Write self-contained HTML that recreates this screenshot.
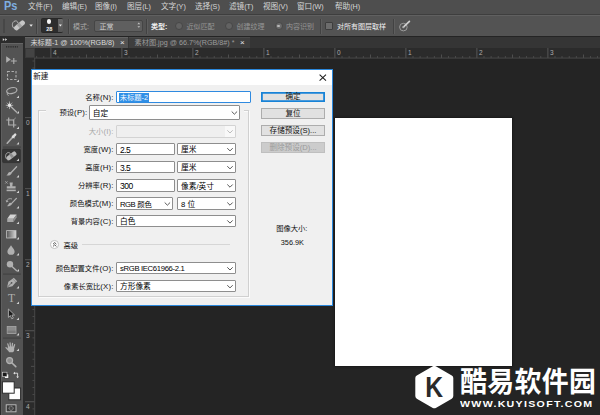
<!DOCTYPE html>
<html><head><meta charset="utf-8">
<style>
html,body{margin:0;padding:0;}
body{width:600px;height:415px;overflow:hidden;background:#242424;position:relative;font-family:"Liberation Sans","Noto Sans CJK SC",sans-serif;}
div,span{position:absolute;box-sizing:border-box;white-space:nowrap;}
svg{position:absolute;left:0;top:0;}
#menubar{left:0;top:0;width:600px;height:15px;background:#4e4e4e;border-bottom:1px solid #3e3e3e;}
#menubar span.m{top:2.2px;font-size:7.6px;line-height:10px;color:#d6d6d6;}
#menubar span.m i{font-style:normal;font-size:7.2px;}
#ps{left:4.2px;top:-0.6px;font-size:12.2px;line-height:14px;color:#7eaee0;font-weight:bold;transform-origin:0 50%;transform:scaleX(0.9);}
#optbar{left:0;top:15px;width:600px;height:21px;background:#535353;border-top:1px solid #606060;}
#optbar span{font-size:7px;line-height:10px;color:#a9a9a9;top:6px;}
#optbar .sep{top:3px;width:1px;height:15px;background:#424242;border-right:1px solid #5e5e5e;width:2px;}
#tabbar{left:25px;top:37px;width:575px;height:11px;background:#353535;}
.tab{top:0;height:11px;font-size:7.2px;line-height:11px;}
#hruler{left:25px;top:48px;width:575px;height:10px;background:#2b2b2b;}
#vruler{left:25px;top:58px;width:9.5px;height:357px;background:#2b2b2b;}
#tb{left:0;top:36px;width:25px;height:379px;background:#2b2b2b;}
#tbbody{left:1px;top:7px;width:22px;height:372px;background:#535353;border-top:1px solid #656565;border-left:1px solid #5e5e5e;}
#dlg{left:31px;top:69px;width:301.8px;height:236.5px;background:#f0f0f0;border:1px solid #2b88dc;}
#dlg .ttl{left:0;top:0;width:300px;height:15px;background:#fff;}
#dlg span.l i{font-style:normal;font-size:7.8px;letter-spacing:0.2px;}
#dlg span.l{font-size:7.3px;line-height:10px;color:#111;text-align:right;}
.inp{background:#fff;border:1px solid #8e8e8e;border-radius:1px;font-size:7.7px;line-height:10.4px;padding-top:1.4px;color:#000;padding-left:3px;}
.btn{left:229px;width:64px;height:10.7px;background:#e1e1e1;border:1px solid #adadad;font-size:7.6px;line-height:8.7px;padding-top:0.8px;text-align:center;color:#111;}
</style></head><body>

<div id="menubar">
<span id="ps">Ps</span>
<span class="m" style="left:28px">文件<i>(F)</i></span>
<span class="m" style="left:62px">编辑<i>(E)</i></span>
<span class="m" style="left:95px">图像<i>(I)</i></span>
<span class="m" style="left:127px">图层<i>(L)</i></span>
<span class="m" style="left:161px">文字<i>(Y)</i></span>
<span class="m" style="left:195px">选择<i>(S)</i></span>
<span class="m" style="left:229px">滤镜<i>(T)</i></span>
<span class="m" style="left:263px">视图<i>(V)</i></span>
<span class="m" style="left:297px">窗口<i>(W)</i></span>
<span class="m" style="left:335px">帮助<i>(H)</i></span>
</div>

<div id="optbar">
<div class="sep" style="left:36.2px"></div>
<div style="left:41px;top:2.4px;width:22.2px;height:14.2px;background:#2d2d2d;border:1px solid #282828;border-radius:1.5px;"></div>
<div style="left:57.8px;top:3.2px;width:5px;height:12.6px;background:linear-gradient(#6a6a6a,#555);border-radius:0 1px 1px 0;"></div>
<div style="left:46.6px;top:3px;width:4.8px;height:4.8px;border-radius:2.4px;background:#f4f4f4;"></div>
<span style="left:46.2px;top:9.8px;font-size:5.6px;line-height:6px;color:#f0f0f0;font-weight:bold;">28</span>
<div class="sep" style="left:68px"></div>
<span style="left:73px">模式:</span>
<div style="left:94px;top:4px;width:49px;height:12px;background:#5f5f5f;border:1px solid #454545;border-radius:2px;"></div>
<span style="left:99.5px;color:#cfcfcf">正常</span>
<div class="sep" style="left:146px"></div>
<span style="left:151px;font-weight:bold;color:#f0f0f0">类型:</span>
<div style="left:175px;top:6px;width:8px;height:8px;border-radius:4px;background:#626262;border:1px solid #474747;"></div>
<span style="left:186.5px;color:#959595">近似匹配</span>
<div style="left:225px;top:6px;width:8px;height:8px;border-radius:4px;background:#626262;border:1px solid #474747;"></div>
<span style="left:236.5px;color:#959595">创建纹理</span>
<div style="left:274.5px;top:6px;width:8px;height:8px;border-radius:4px;background:#6c6c6c;border:1px solid #474747;"></div>
<div style="left:277.3px;top:8.8px;width:2.4px;height:2.4px;border-radius:1.2px;background:#b8b8b8;"></div>
<span style="left:286px;color:#959595">内容识别</span>
<div class="sep" style="left:320px"></div>
<div style="left:325.3px;top:5.5px;width:8.2px;height:8.6px;background:#6c6c6c;border:1px solid #3d3d3d;border-radius:1px;"></div>
<span style="left:337px;color:#f0f0f0">对所有图层取样</span>
<div class="sep" style="left:393px"></div>
</div>

<div id="tabbar">
<div class="tab" style="left:0;width:103px;background:#535353;color:#dcdcdc;padding-left:5.4px;border-top:1px solid #646464;line-height:9.5px;">未标题-1 @ 100%(RGB/8) <span style="left:95px;top:-0.5px;color:#e8e8e8;font-size:8px;">×</span></div>
<div class="tab" style="left:103.5px;width:121px;background:#3e3e3e;color:#9c9c9c;padding-left:6px;border-top:1px solid #4a4a4a;line-height:9.5px;">素材图.jpg @ 66.7%(RGB/8#) * <span style="left:111.5px;top:-0.5px;color:#e8e8e8;font-size:8px;">×</span></div>
</div>
<div id="hruler">
<div style="left:0;top:0;width:9.5px;height:10px;background:#444;border:1px solid #3a3a3a;"></div>
</div>
<div id="vruler"></div>

<div id="tb"><div id="tbbody"></div></div>

<div style="left:334.85px;top:117.75px;width:177.5px;height:247.9px;background:#fff;box-shadow:0 0 1.6px 0.8px #1a1a1a;"></div>

<svg width="600" height="415" viewBox="0 0 600 415">
<defs><linearGradient id="gr" x1="0" x2="1" y1="0" y2="0"><stop offset="0" stop-color="#555"/><stop offset="1" stop-color="#d8d8d8"/></linearGradient></defs>
<!-- options bar gripper -->
<g fill="#3c3c3c"><rect x="3" y="19.5" width="2" height="1"/><rect x="3" y="21.5" width="2" height="1"/><rect x="3" y="23.5" width="2" height="1"/><rect x="3" y="25.5" width="2" height="1"/><rect x="3" y="27.5" width="2" height="1"/><rect x="3" y="29.5" width="2" height="1"/><rect x="3" y="31.5" width="2" height="1"/></g>
<!-- options tool icon: healing brush -->
<path d="M15.6 29C12.2 28.6 11.2 23.4 14 21.4C15.8 20.2 17.8 21.2 18 23" fill="none" stroke="#c0c0c0" stroke-width="0.9"/>
<rect x="13.3" y="23" width="12.4" height="4.8" rx="1.8" transform="rotate(-40 19.5 25.4)" fill="#c6c6c6"/>
<rect x="17.8" y="23" width="3.4" height="4.8" transform="rotate(-40 19.5 25.4)" fill="#a2a2a2"/>
<path d="M29.4 24.6h3.4l-1.7 2.2z" fill="#e8e8e8"/>
<path d="M58.9 24.6h3l-1.5 2z" fill="#f0f0f0"/>
<path d="M137.4 24.2l1.4 -1.6l1.4 1.6zM137.4 26.2l1.4 1.6l1.4 -1.6z" fill="#c4c4c4"/>
<!-- sample all icon -->
<circle cx="403.4" cy="27.1" r="3.8" fill="none" stroke="#9c9c9c" stroke-width="1"/>
<circle cx="403.4" cy="27.1" r="1.2" fill="#b0b0b0"/>
<path d="M404.4 26.2l5 -4.8" stroke="#cfcfcf" stroke-width="1.7" stroke-linecap="round"/>
<!-- toolbar header arrows -->
<path d="M2.8 38.2l1.9 1.4l-1.9 1.4zM5.2 38.2l1.9 1.4l-1.9 1.4z" fill="#dcdcdc"/>
<rect x="6.0" y="46" width="1" height="1.6" fill="#2e2e2e"/>
<rect x="7.8" y="46" width="1" height="1.6" fill="#2e2e2e"/>
<rect x="9.6" y="46" width="1" height="1.6" fill="#2e2e2e"/>
<rect x="11.4" y="46" width="1" height="1.6" fill="#2e2e2e"/>
<rect x="13.2" y="46" width="1" height="1.6" fill="#2e2e2e"/>
<rect x="15.0" y="46" width="1" height="1.6" fill="#2e2e2e"/>
<rect x="16.8" y="46" width="1" height="1.6" fill="#2e2e2e"/>
<path d="M6.2 56.2L10.8 59.5L6.2 62.8Z" fill="#b0b0b0"/>
<path d="M13.8 58v6M10.8 61h6" stroke="#b0b0b0" stroke-width="1.1" fill="none"/>
<rect x="7.5" y="71.5" width="8.5" height="8" fill="none" stroke="#b0b0b0" stroke-width="1.1" stroke-dasharray="2.4 1.6"/>
<path d="M19 79.5L19 82L16.5 82Z" fill="#d0d0d0"/>
<ellipse cx="11.8" cy="90.6" rx="5.2" ry="2.9" transform="rotate(-14 11.8 90.6)" fill="none" stroke="#b0b0b0" stroke-width="1.2"/>
<path d="M8 92.6c-1.2 1.2 -0.8 2.6 0.6 3" fill="none" stroke="#b0b0b0" stroke-width="1"/>
<path d="M19 95.5L19 98L16.5 98Z" fill="#d0d0d0"/>
<path d="M9.5 101.5v7.6M5.8 105.3h7.4M6.9 102.7l5.2 5.2M12.1 102.7l-5.2 5.2" stroke="#b0b0b0" stroke-width="0.9"/>
<circle cx="9.5" cy="105.3" r="1.7" fill="#e6e6e6"/>
<path d="M10.8 106.6L17 112.4" stroke="#b0b0b0" stroke-width="1.4"/>
<path d="M19 111.0L19 113.5L16.5 113.5Z" fill="#d0d0d0"/>
<path d="M8.7 117.6v7.4h7.6M6.3 120h7.4v7.4" stroke="#b0b0b0" stroke-width="1.2" fill="none"/>
<path d="M12.8 120.6L15.8 117.8" stroke="#b0b0b0" stroke-width="0.7"/>
<path d="M19 126.5L19 129L16.5 129Z" fill="#d0d0d0"/>
<path d="M7.2 143.2L12.6 137.2" stroke="#b0b0b0" stroke-width="1.6" stroke-linecap="round"/>
<path d="M12 135.8L14.6 138.2" stroke="#b0b0b0" stroke-width="1.2"/>
<path d="M13 137L15.2 134.6" stroke="#dedede" stroke-width="2.4" stroke-linecap="round"/>
<path d="M19 142.0L19 144.5L16.5 144.5Z" fill="#d0d0d0"/>
<rect x="3" y="146.6" width="18" height="1" fill="#3f3f3f"/>
<rect x="2.6" y="149" width="17.8" height="13.6" rx="1" fill="#363636" stroke="#2c2c2c" stroke-width="0.6"/>
<path d="M8.4 160C5.4 159.6 4.6 154.8 7 153C8.6 151.9 10.4 152.8 10.6 154.4" fill="none" stroke="#b0b0b0" stroke-width="0.85"/>
<rect x="6" y="153.6" width="11" height="4.4" rx="1.6" transform="rotate(-38 11.5 155.8)" fill="#b9b9b9"/>
<rect x="10.2" y="153.6" width="2.8" height="4.4" transform="rotate(-38 11.5 155.8)" fill="#8d8d8d"/>
<path d="M19 158.5L19 161L16.5 161Z" fill="#d0d0d0"/>
<path d="M16.6 166.8L11 172.8" stroke="#b0b0b0" stroke-width="1.3" stroke-linecap="round"/>
<path d="M11.6 173.2c-0.6 2 -3 2.8 -5.2 2.2c1.4 -0.6 1.4 -1.6 2.2 -2.8c0.9 -1 2.4 -0.8 3 0.6z" fill="#b0b0b0"/>
<path d="M19 175.0L19 177.5L16.5 177.5Z" fill="#d0d0d0"/>
<path d="M9.6 182.6h3.2l-0.5 3.6h3.3v2.4h-8.8v-2.4h3.3z" fill="#b0b0b0"/>
<rect x="6.6" y="189.6" width="9.2" height="1.6" fill="#b0b0b0"/>
<path d="M5.2 181.2l2.4 2.4M7.6 181.2l-2.4 2.4" stroke="#b0b0b0" stroke-width="0.7"/>
<path d="M19 190.5L19 193L16.5 193Z" fill="#d0d0d0"/>
<path d="M16.4 198.4L11.4 203.6" stroke="#b0b0b0" stroke-width="1.3" stroke-linecap="round"/>
<path d="M11.8 204c-0.6 1.8 -2.8 2.6 -4.8 2c1.2 -0.6 1.2 -1.4 2 -2.6c0.8 -0.9 2.2 -0.7 2.8 0.6z" fill="#b0b0b0"/>
<path d="M6.6 201.4c0.6 -2.4 3.2 -3.4 5.4 -2.4" fill="none" stroke="#b0b0b0" stroke-width="0.9"/>
<path d="M5.6 200.2l1 2.2l2 -1.2z" fill="#b0b0b0"/>
<path d="M19 206.0L19 208.5L16.5 208.5Z" fill="#d0d0d0"/>
<path d="M10.2 214.4h6.4l-3 4.4h-6.4z" fill="#d4d4d4"/>
<path d="M7.2 218.8h6.4v3.2h-6.4z" fill="#a8a8a8"/>
<path d="M13.6 218.8l3 -4.4v3.2l-3 4.4z" fill="#8e8e8e"/>
<path d="M19 221.5L19 224L16.5 224Z" fill="#d0d0d0"/>
<rect x="6.6" y="230.6" width="9.4" height="7.4" fill="url(#gr)" stroke="#c0c0c0" stroke-width="0.8"/>
<path d="M19 237.0L19 239.5L16.5 239.5Z" fill="#d0d0d0"/>
<path d="M11 245.2c1.4 2.4 3.6 4.2 3.6 6.2a3.6 3.4 0 0 1 -7.2 0c0 -2 2.2 -3.8 3.6 -6.2z" fill="#b0b0b0"/>
<path d="M19 253.0L19 255.5L16.5 255.5Z" fill="#d0d0d0"/>
<circle cx="10" cy="264.2" r="3.2" fill="#b0b0b0"/>
<path d="M12 266.6L16.4 270.6" stroke="#b0b0b0" stroke-width="1.4" stroke-linecap="round"/>
<path d="M19 269.0L19 271.5L16.5 271.5Z" fill="#d0d0d0"/>
<rect x="3" y="273.6" width="18" height="1" fill="#3f3f3f"/>
<path d="M7 287.6l1.4 -5.8l4.2 -3l3.2 3.4l-3.4 4z" fill="#b0b0b0"/>
<path d="M7.4 287.2l3.8 -4" stroke="#535353" stroke-width="0.8"/>
<circle cx="11.6" cy="282.8" r="0.9" fill="#535353"/>
<path d="M13.2 278.2l3.4 3.6" stroke="#b0b0b0" stroke-width="1.6"/>
<path d="M19 286.0L19 288.5L16.5 288.5Z" fill="#d0d0d0"/>
<text x="11.6" y="301.6" font-family="Liberation Serif, serif" font-size="11.5" text-anchor="middle" fill="#b0b0b0">T</text>
<path d="M19 301.5L19 304L16.5 304Z" fill="#d0d0d0"/>
<path d="M8.4 309v8.4l2 -1.8l1.4 3.2l1.5 -0.7l-1.4 -3.1h2.7z" fill="#1e1e1e" stroke="#b0b0b0" stroke-width="0.9" stroke-linejoin="round"/>
<path d="M19 317.5L19 320L16.5 320Z" fill="#d0d0d0"/>
<rect x="7.2" y="326.4" width="8.8" height="7" fill="#8c8c8c" stroke="#a8a8a8" stroke-width="0.8"/>
<rect x="7.6" y="330.6" width="8" height="2.4" fill="#7a7a7a"/>
<path d="M19 333.0L19 335.5L16.5 335.5Z" fill="#d0d0d0"/>
<rect x="3" y="337.6" width="18" height="1" fill="#3f3f3f"/>
<path d="M8.7 347.2L7.8 343.9M10.4 346.6L10.1 342.9M12.1 346.7L12.5 343.3M13.7 347.5L14.6 344.7M8.1 349.8L6 347.6" stroke="#b0b0b0" stroke-width="1.25" stroke-linecap="round" fill="none"/>
<path d="M7.9 346.6h6.3v3.2c0 1.5 -0.9 2.4 -1.6 2.4h-3.4c-1 -0.9 -1.6 -2.4 -1.6 -3.6z" fill="#b0b0b0"/>
<path d="M19 348.5L19 351L16.5 351Z" fill="#d0d0d0"/>
<circle cx="9.6" cy="360.6" r="3" fill="#8e8e8e" stroke="#b0b0b0" stroke-width="1.2"/>
<path d="M12 363L15.8 366.6" stroke="#b0b0b0" stroke-width="1.6" stroke-linecap="round"/>
<rect x="4.4" y="374" width="4.4" height="4.4" fill="#f4f4f4" stroke="#222" stroke-width="0.6"/>
<rect x="2.6" y="372.2" width="4.4" height="4.4" fill="#1a1a1a" stroke="#ddd" stroke-width="0.6"/>
<path d="M14.6 373.2h3v3.6" fill="none" stroke="#e0e0e0" stroke-width="0.9"/>
<path d="M13.2 373.2l1.8 -1.4v2.8zM17.6 378.2l-1.4 -1.8h2.8z" fill="#e0e0e0"/>
<rect x="8.8" y="388" width="11.8" height="11.8" fill="#fff" stroke="#2a2a2a" stroke-width="1"/>
<rect x="2.4" y="381.8" width="11.8" height="11.4" fill="#fff" stroke="#2a2a2a" stroke-width="1"/>
<rect x="6.2" y="404.8" width="9.8" height="7" fill="#3a3a3a" stroke="#c4c4c4" stroke-width="0.9"/>
<circle cx="11.1" cy="408.3" r="2.1" fill="#4a4a4a" stroke="#c4c4c4" stroke-width="0.8" stroke-dasharray="1 0.7"/>
<rect x="36.3" y="56" width="0.8" height="2" fill="#505050"/>
<rect x="43.4" y="56" width="0.8" height="2" fill="#505050"/>
<rect x="50.5" y="48" width="0.8" height="10" fill="#606060"/>
<rect x="57.6" y="56" width="0.8" height="2" fill="#505050"/>
<rect x="64.7" y="56" width="0.8" height="2" fill="#505050"/>
<rect x="71.8" y="56" width="0.8" height="2" fill="#505050"/>
<rect x="78.9" y="56" width="0.8" height="2" fill="#505050"/>
<rect x="86.0" y="54.5" width="0.8" height="3.5" fill="#585858"/>
<rect x="93.1" y="56" width="0.8" height="2" fill="#505050"/>
<rect x="100.2" y="56" width="0.8" height="2" fill="#505050"/>
<rect x="107.3" y="56" width="0.8" height="2" fill="#505050"/>
<rect x="114.4" y="56" width="0.8" height="2" fill="#505050"/>
<rect x="121.5" y="48" width="0.8" height="10" fill="#606060"/>
<rect x="128.6" y="56" width="0.8" height="2" fill="#505050"/>
<rect x="135.7" y="56" width="0.8" height="2" fill="#505050"/>
<rect x="142.8" y="56" width="0.8" height="2" fill="#505050"/>
<rect x="149.9" y="56" width="0.8" height="2" fill="#505050"/>
<rect x="157.0" y="54.5" width="0.8" height="3.5" fill="#585858"/>
<rect x="164.1" y="56" width="0.8" height="2" fill="#505050"/>
<rect x="171.2" y="56" width="0.8" height="2" fill="#505050"/>
<rect x="178.3" y="56" width="0.8" height="2" fill="#505050"/>
<rect x="185.4" y="56" width="0.8" height="2" fill="#505050"/>
<rect x="192.5" y="48" width="0.8" height="10" fill="#606060"/>
<rect x="199.6" y="56" width="0.8" height="2" fill="#505050"/>
<rect x="206.7" y="56" width="0.8" height="2" fill="#505050"/>
<rect x="213.8" y="56" width="0.8" height="2" fill="#505050"/>
<rect x="220.9" y="56" width="0.8" height="2" fill="#505050"/>
<rect x="228.0" y="54.5" width="0.8" height="3.5" fill="#585858"/>
<rect x="235.1" y="56" width="0.8" height="2" fill="#505050"/>
<rect x="242.2" y="56" width="0.8" height="2" fill="#505050"/>
<rect x="249.3" y="56" width="0.8" height="2" fill="#505050"/>
<rect x="256.4" y="56" width="0.8" height="2" fill="#505050"/>
<rect x="263.5" y="48" width="0.8" height="10" fill="#606060"/>
<rect x="270.6" y="56" width="0.8" height="2" fill="#505050"/>
<rect x="277.7" y="56" width="0.8" height="2" fill="#505050"/>
<rect x="284.8" y="56" width="0.8" height="2" fill="#505050"/>
<rect x="291.9" y="56" width="0.8" height="2" fill="#505050"/>
<rect x="299.0" y="54.5" width="0.8" height="3.5" fill="#585858"/>
<rect x="306.1" y="56" width="0.8" height="2" fill="#505050"/>
<rect x="313.2" y="56" width="0.8" height="2" fill="#505050"/>
<rect x="320.3" y="56" width="0.8" height="2" fill="#505050"/>
<rect x="327.4" y="56" width="0.8" height="2" fill="#505050"/>
<rect x="334.5" y="48" width="0.8" height="10" fill="#606060"/>
<rect x="341.6" y="56" width="0.8" height="2" fill="#505050"/>
<rect x="348.7" y="56" width="0.8" height="2" fill="#505050"/>
<rect x="355.8" y="56" width="0.8" height="2" fill="#505050"/>
<rect x="362.9" y="56" width="0.8" height="2" fill="#505050"/>
<rect x="370.0" y="54.5" width="0.8" height="3.5" fill="#585858"/>
<rect x="377.1" y="56" width="0.8" height="2" fill="#505050"/>
<rect x="384.2" y="56" width="0.8" height="2" fill="#505050"/>
<rect x="391.3" y="56" width="0.8" height="2" fill="#505050"/>
<rect x="398.4" y="56" width="0.8" height="2" fill="#505050"/>
<rect x="405.5" y="48" width="0.8" height="10" fill="#606060"/>
<rect x="412.6" y="56" width="0.8" height="2" fill="#505050"/>
<rect x="419.7" y="56" width="0.8" height="2" fill="#505050"/>
<rect x="426.8" y="56" width="0.8" height="2" fill="#505050"/>
<rect x="433.9" y="56" width="0.8" height="2" fill="#505050"/>
<rect x="441.0" y="54.5" width="0.8" height="3.5" fill="#585858"/>
<rect x="448.1" y="56" width="0.8" height="2" fill="#505050"/>
<rect x="455.2" y="56" width="0.8" height="2" fill="#505050"/>
<rect x="462.3" y="56" width="0.8" height="2" fill="#505050"/>
<rect x="469.4" y="56" width="0.8" height="2" fill="#505050"/>
<rect x="476.5" y="48" width="0.8" height="10" fill="#606060"/>
<rect x="483.6" y="56" width="0.8" height="2" fill="#505050"/>
<rect x="490.7" y="56" width="0.8" height="2" fill="#505050"/>
<rect x="497.8" y="56" width="0.8" height="2" fill="#505050"/>
<rect x="504.9" y="56" width="0.8" height="2" fill="#505050"/>
<rect x="512.0" y="54.5" width="0.8" height="3.5" fill="#585858"/>
<rect x="519.1" y="56" width="0.8" height="2" fill="#505050"/>
<rect x="526.1" y="56" width="0.8" height="2" fill="#505050"/>
<rect x="533.3" y="56" width="0.8" height="2" fill="#505050"/>
<rect x="540.4" y="56" width="0.8" height="2" fill="#505050"/>
<rect x="547.5" y="48" width="0.8" height="10" fill="#606060"/>
<rect x="554.6" y="56" width="0.8" height="2" fill="#505050"/>
<rect x="561.6" y="56" width="0.8" height="2" fill="#505050"/>
<rect x="568.8" y="56" width="0.8" height="2" fill="#505050"/>
<rect x="575.9" y="56" width="0.8" height="2" fill="#505050"/>
<rect x="583.0" y="54.5" width="0.8" height="3.5" fill="#585858"/>
<rect x="590.1" y="56" width="0.8" height="2" fill="#505050"/>
<rect x="597.1" y="56" width="0.8" height="2" fill="#505050"/>
<text x="53.1" y="54.6" font-size="6.5" fill="#adadad" font-family="Liberation Sans, sans-serif">4</text>
<text x="124.1" y="54.6" font-size="6.5" fill="#adadad" font-family="Liberation Sans, sans-serif">3</text>
<text x="195.1" y="54.6" font-size="6.5" fill="#adadad" font-family="Liberation Sans, sans-serif">2</text>
<text x="266.1" y="54.6" font-size="6.5" fill="#adadad" font-family="Liberation Sans, sans-serif">1</text>
<text x="337.1" y="54.6" font-size="6.5" fill="#adadad" font-family="Liberation Sans, sans-serif">0</text>
<text x="408.1" y="54.6" font-size="6.5" fill="#adadad" font-family="Liberation Sans, sans-serif">1</text>
<text x="479.1" y="54.6" font-size="6.5" fill="#adadad" font-family="Liberation Sans, sans-serif">2</text>
<text x="550.1" y="54.6" font-size="6.5" fill="#adadad" font-family="Liberation Sans, sans-serif">3</text>
<rect x="32.5" y="60.6" width="2" height="0.8" fill="#505050"/>
<rect x="32.5" y="67.6" width="2" height="0.8" fill="#505050"/>
<rect x="32.5" y="74.8" width="2" height="0.8" fill="#505050"/>
<rect x="31" y="81.8" width="3.5" height="0.8" fill="#585858"/>
<rect x="32.5" y="88.9" width="2" height="0.8" fill="#505050"/>
<rect x="32.5" y="96.0" width="2" height="0.8" fill="#505050"/>
<rect x="32.5" y="103.1" width="2" height="0.8" fill="#505050"/>
<rect x="32.5" y="110.2" width="2" height="0.8" fill="#505050"/>
<rect x="25" y="117.3" width="9.5" height="0.8" fill="#606060"/>
<rect x="32.5" y="124.4" width="2" height="0.8" fill="#505050"/>
<rect x="32.5" y="131.5" width="2" height="0.8" fill="#505050"/>
<rect x="32.5" y="138.7" width="2" height="0.8" fill="#505050"/>
<rect x="32.5" y="145.8" width="2" height="0.8" fill="#505050"/>
<rect x="31" y="152.8" width="3.5" height="0.8" fill="#585858"/>
<rect x="32.5" y="159.9" width="2" height="0.8" fill="#505050"/>
<rect x="32.5" y="167.0" width="2" height="0.8" fill="#505050"/>
<rect x="32.5" y="174.2" width="2" height="0.8" fill="#505050"/>
<rect x="32.5" y="181.2" width="2" height="0.8" fill="#505050"/>
<rect x="25" y="188.3" width="9.5" height="0.8" fill="#606060"/>
<rect x="32.5" y="195.4" width="2" height="0.8" fill="#505050"/>
<rect x="32.5" y="202.5" width="2" height="0.8" fill="#505050"/>
<rect x="32.5" y="209.7" width="2" height="0.8" fill="#505050"/>
<rect x="32.5" y="216.8" width="2" height="0.8" fill="#505050"/>
<rect x="31" y="223.8" width="3.5" height="0.8" fill="#585858"/>
<rect x="32.5" y="230.9" width="2" height="0.8" fill="#505050"/>
<rect x="32.5" y="238.0" width="2" height="0.8" fill="#505050"/>
<rect x="32.5" y="245.2" width="2" height="0.8" fill="#505050"/>
<rect x="32.5" y="252.2" width="2" height="0.8" fill="#505050"/>
<rect x="25" y="259.4" width="9.5" height="0.8" fill="#606060"/>
<rect x="32.5" y="266.5" width="2" height="0.8" fill="#505050"/>
<rect x="32.5" y="273.6" width="2" height="0.8" fill="#505050"/>
<rect x="32.5" y="280.7" width="2" height="0.8" fill="#505050"/>
<rect x="32.5" y="287.8" width="2" height="0.8" fill="#505050"/>
<rect x="31" y="294.9" width="3.5" height="0.8" fill="#585858"/>
<rect x="32.5" y="302.0" width="2" height="0.8" fill="#505050"/>
<rect x="32.5" y="309.1" width="2" height="0.8" fill="#505050"/>
<rect x="32.5" y="316.2" width="2" height="0.8" fill="#505050"/>
<rect x="32.5" y="323.2" width="2" height="0.8" fill="#505050"/>
<rect x="25" y="330.4" width="9.5" height="0.8" fill="#606060"/>
<rect x="32.5" y="337.5" width="2" height="0.8" fill="#505050"/>
<rect x="32.5" y="344.6" width="2" height="0.8" fill="#505050"/>
<rect x="32.5" y="351.7" width="2" height="0.8" fill="#505050"/>
<rect x="32.5" y="358.8" width="2" height="0.8" fill="#505050"/>
<rect x="31" y="365.9" width="3.5" height="0.8" fill="#585858"/>
<rect x="32.5" y="373.0" width="2" height="0.8" fill="#505050"/>
<rect x="32.5" y="380.1" width="2" height="0.8" fill="#505050"/>
<rect x="32.5" y="387.2" width="2" height="0.8" fill="#505050"/>
<rect x="32.5" y="394.2" width="2" height="0.8" fill="#505050"/>
<rect x="25" y="401.4" width="9.5" height="0.8" fill="#606060"/>
<rect x="32.5" y="408.5" width="2" height="0.8" fill="#505050"/>
<text x="26" y="125.0" font-size="6.5" fill="#adadad" font-family="Liberation Sans, sans-serif">0</text>
<text x="26" y="195.9" font-size="6.5" fill="#adadad" font-family="Liberation Sans, sans-serif">1</text>
<text x="26" y="266.9" font-size="6.5" fill="#adadad" font-family="Liberation Sans, sans-serif">2</text>
<text x="26" y="337.9" font-size="6.5" fill="#adadad" font-family="Liberation Sans, sans-serif">3</text>
<text x="26" y="408.9" font-size="6.5" fill="#adadad" font-family="Liberation Sans, sans-serif">4</text>
<rect x="34.5" y="57.6" width="565.5" height="0.9" fill="#4c4c4c"/>
<rect x="34.3" y="58" width="0.9" height="357" fill="#4c4c4c"/>
</svg>

<div id="dlg">
<div class="ttl"></div>
<span style="left:1.2px;top:2.1px;font-size:7.6px;line-height:10px;color:#111;">新建</span>
<span class="l" style="right:218.1px;top:22.9px">名称<i>(N):</i></span>
<div class="inp" style="left:84px;top:21px;width:134.5px;height:12px;border-color:#2f8ae0"><span style="left:1.7px;top:0.6px;height:9.4px;line-height:9.4px;background:#2f8fe6;color:#f4f8ff;padding:0 1px;font-size:7.3px">未标题-2</span></div>
<div style="left:6px;top:40px;width:211px;height:186.5px;border:1px solid #d0d0d0;box-shadow:inset 1px 1px 0 #fbfbfb, 1px 1px 0 #fbfbfb;"></div>
<div style="left:13.5px;top:38px;width:198.3px;height:5px;background:#f0f0f0;"></div>
<span class="l" style="left:27.5px;top:38.3px;">预设<i>(P):</i></span>
<div class="inp" style="left:57px;top:35px;width:150.5px;height:14.6px;line-height:12.6px;padding-left:2.8px;padding-top:1.5px">自定</div>
<span class="l" style="right:218.1px;top:57.3px;color:#a9a9a9">大小<i>(I):</i></span>
<div class="inp" style="left:84px;top:55.2px;width:119.5px;height:12.4px;background:#efefef;border-color:#d3d3d3"></div>
<div style="left:192.5px;top:56.2px;width:10px;height:10.4px;background:#f8f8f8;"></div>
<span class="l" style="right:218.1px;top:75.0px;color:#111">宽度<i>(W):</i></span>
<div class="inp" style="left:84px;top:72.9px;width:59px;height:12.4px;"><span style="position:relative;top:-0.6px;font-size:8.5px;letter-spacing:-0.5px;">2.5</span></div>
<div class="inp" style="left:145px;top:72.9px;width:58.5px;height:12.4px;">厘米</div>
<span class="l" style="right:218.1px;top:93.0px;color:#111">高度<i>(H):</i></span>
<div class="inp" style="left:84px;top:90.9px;width:59px;height:12.4px;"><span style="position:relative;top:-0.6px;font-size:8.5px;letter-spacing:-0.5px;">3.5</span></div>
<div class="inp" style="left:145px;top:90.9px;width:58.5px;height:12.4px;">厘米</div>
<span class="l" style="right:218.1px;top:111.3px;color:#111">分辨率<i>(R):</i></span>
<div class="inp" style="left:84px;top:109.2px;width:59px;height:12.4px;"><span style="position:relative;top:-0.6px;font-size:8.5px;letter-spacing:-0.5px;">300</span></div>
<div class="inp" style="left:145px;top:109.2px;width:58.5px;height:12.4px;">像素/英寸</div>
<span class="l" style="right:218.1px;top:129.3px;color:#111">颜色模式<i>(M):</i></span>
<div class="inp" style="left:84px;top:127.2px;width:56.5px;height:12.4px;"><span style="position:static;letter-spacing:-0.55px">RGB</span> <span style="position:static;font-size:7.4px">颜色</span></div>
<div class="inp" style="left:145px;top:127.2px;width:58.5px;height:12.4px;">8 位</div>
<span class="l" style="right:218.1px;top:147.2px;color:#111">背景内容<i>(C):</i></span>
<div class="inp" style="left:84px;top:145.1px;width:119.5px;height:12.4px;">白色</div>
<div style="left:18.4px;top:170.1px;width:8.6px;height:8.6px;border-radius:4.3px;border:1px solid #c2c2c2;background:#fdfdfd;"></div>
<span class="l" style="left:31.5px;top:170.7px">高级</span>
<div style="left:49.5px;top:174px;width:148px;height:1px;background:#d6d6d6;"></div>
<span class="l" style="right:218.1px;top:194.1px;color:#111">颜色配置文件<i>(O):</i></span>
<div class="inp" style="left:84px;top:192.0px;width:119.5px;height:12.4px;"><span style="position:static;letter-spacing:-0.33px">sRGB IEC61966-2.1</span></div>
<span class="l" style="right:218.1px;top:212.0px;color:#111">像素长宽比<i>(X):</i></span>
<div class="inp" style="left:84px;top:209.9px;width:119.5px;height:12.4px;">方形像素</div>
<div class="btn" style="top:21.7px;border-color:#1883d7;box-shadow:inset 0 0 0 0.8px #1883d7;">确定</div>
<div class="btn" style="top:38.4px;">复位</div>
<div class="btn" style="top:55.2px;">存储预设(S)...</div>
<div class="btn" style="top:72.1px;background:#cccccc;border-color:#bfbfbf;color:#9b9b9b;">删除预设(D)...</div>
<span class="l" style="left:244.2px;top:153.9px">图像大小:</span>
<span class="l" style="left:248.8px;top:168.3px">356.9K</span>
</div>
<svg width="600" height="415" viewBox="0 0 600 415">
<path d="M319.6 74.6L326 80.6M326 74.6L319.6 80.6" stroke="#1e1e1e" stroke-width="1.05" fill="none"/>
<path d="M231.7 111.5L234.4 114.2L237.1 111.5" fill="none" stroke="#444" stroke-width="0.9"/>
<path d="M227.3 130.3L230.0 133.0L232.7 130.3" fill="none" stroke="#b5b5b5" stroke-width="0.9"/>
<path d="M227.3 148.2L230.0 150.9L232.7 148.2" fill="none" stroke="#444" stroke-width="0.9"/>
<path d="M227.3 166.2L230.0 168.9L232.7 166.2" fill="none" stroke="#444" stroke-width="0.9"/>
<path d="M227.3 184.5L230.0 187.2L232.7 184.5" fill="none" stroke="#444" stroke-width="0.9"/>
<path d="M227.3 202.5L230.0 205.2L232.7 202.5" fill="none" stroke="#444" stroke-width="0.9"/>
<path d="M227.3 220.4L230.0 223.1L232.7 220.4" fill="none" stroke="#444" stroke-width="0.9"/>
<path d="M227.3 267.3L230.0 270.0L232.7 267.3" fill="none" stroke="#444" stroke-width="0.9"/>
<path d="M227.3 285.2L230.0 287.9L232.7 285.2" fill="none" stroke="#444" stroke-width="0.9"/>
<path d="M164.7 202.5L167.4 205.2L170.1 202.5" fill="none" stroke="#444" stroke-width="0.9"/>
<path d="M53 244.2L54.7 242.6L56.4 244.2M53 246.4L54.7 244.8L56.4 246.4" fill="none" stroke="#333" stroke-width="0.8"/>
</svg>

<div id="wm">
<svg width="600" height="415" viewBox="0 0 600 415"><path d="M434.3 368.8L450.3 378L450.3 396.1L434.3 405.3L418.3 396.1L418.3 378Z" fill="#fff" stroke="#fff" stroke-width="6" stroke-linejoin="round"/><text x="434.2" y="396.8" font-family="Liberation Sans, sans-serif" font-size="28.6" font-weight="bold" text-anchor="middle" fill="#2a2a2a" textLength="17.8" lengthAdjust="spacingAndGlyphs">K</text></svg>
<span id="wm1" style="left:460px;top:365px;font-size:26.9px;letter-spacing:0.35px;line-height:36px;font-weight:700;color:#fff;transform-origin:0 50%;transform:scaleY(1.05);">酷易软件园</span>
<span id="wm2" style="left:460.4px;top:399px;font-size:9px;line-height:10px;font-weight:bold;color:#fff;letter-spacing:1.1px;transform-origin:0 50%;transform:scaleX(1.18);">WWW.KUYISOFT.COM</span>
</div>

</body></html>
